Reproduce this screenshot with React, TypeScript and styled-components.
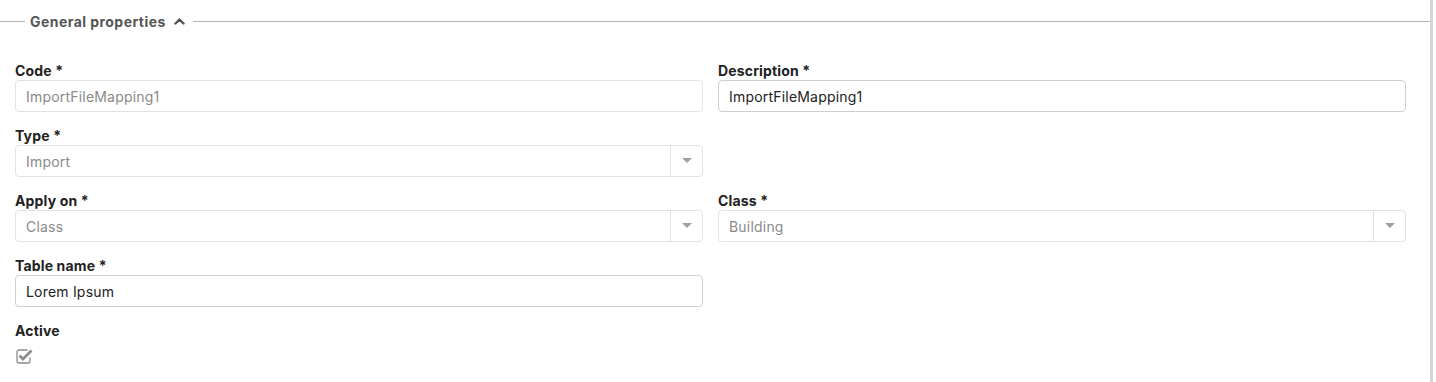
import React from 'react'
import styled, { createGlobalStyle } from 'styled-components'

const GlobalStyle = createGlobalStyle`
  html, body {
    margin: 0;
    padding: 0;
    background: #fff;
  }
  body {
    font-family: Inter, "Noto Sans", sans-serif;
    color: #222;
  }
`

const Page = styled.div`
  display: flex;
  width: 1436px;
  height: 382px;
  overflow: hidden;
`

const Content = styled.div`
  width: 1433px;
  flex: none;
  border-right: 3px solid #d5d5d5;
  box-sizing: border-box;
`

const Header = styled.div`
  display: flex;
  align-items: center;
  height: 42px;
`

const Line = styled.div<{ grow?: boolean }>`
  height: 1px;
  background: #b3b3b3;
  width: 25px;
  ${p => p.grow && `flex: 1;`}
`

const Legend = styled.div`
  display: flex;
  align-items: center;
  gap: 8px;
  padding: 0 8px 0 5px;
  font-size: 14px;
  font-weight: 700;
  color: #555;
  letter-spacing: 0.45px;
`

const Form = styled.div`
  display: grid;
  grid-template-columns: 688px 688px;
  column-gap: 15px;
  row-gap: 15px;
  padding: 20px 0 0 15px;
`

const Field = styled.div`
  display: flex;
  flex-direction: column;
`

const Label = styled.div`
  height: 18px;
  line-height: 18px;
  font-size: 14px;
  font-weight: 700;
  color: #222;
  letter-spacing: 0.15px;
`

const Input = styled.div<{ disabled?: boolean }>`
  display: flex;
  align-items: center;
  height: 32px;
  box-sizing: border-box;
  border: 1px solid ${p => (p.disabled ? '#e2e2e2' : '#cfcfcf')};
  border-radius: 4px;
  padding: 0 10px;
  font-size: 14px;
  letter-spacing: 0.2px;
  color: ${p => (p.disabled ? '#8a8a8a' : '#222')};
`

const Select = styled.div`
  display: flex;
  height: 32px;
  box-sizing: border-box;
  border: 1px solid #e2e2e2;
  border-radius: 4px;
  font-size: 14px;
  letter-spacing: 0.2px;
  color: #8a8a8a;
`

const SelectValue = styled.div`
  flex: 1;
  display: flex;
  align-items: center;
  padding: 0 10px;
`

const SelectArrow = styled.div`
  width: 31px;
  border-left: 1px solid #e2e2e2;
  display: flex;
  align-items: center;
  justify-content: center;
`

const Check = styled.div`
  height: 32px;
  display: flex;
  align-items: center;
  padding-left: 1px;
`

const Caret = () => (
  <svg width="10" height="6" viewBox="0 0 10 6">
    <path d="M0 0h10L5 5z" fill="#a0a0a0" />
  </svg>
)

const ChevronUp = () => (
  <svg width="11" height="8" viewBox="0 0 11 8">
    <path d="M1.5 6.5 5.5 2.5 9.5 6.5" fill="none" stroke="#555" strokeWidth="2.4" strokeLinecap="round" strokeLinejoin="round" />
  </svg>
)

const CheckIcon = () => (
  <svg width="17" height="16" viewBox="0 0 17 16">
    <path d="M13.5 9.5v3.5a2 2 0 0 1-2 2H2.5a2 2 0 0 1-2-2V4a2 2 0 0 1 2-2h8.5" fill="none" stroke="#8c8c8c" strokeWidth="1.3" transform="translate(0.5 0)" />
    <path d="M3.5 7.5l3.5 3.5 8.5-8.5" fill="none" stroke="#8c8c8c" strokeWidth="2.8" strokeLinejoin="miter" />
  </svg>
)

const SelectBox = ({ value }: { value: string }) => (
  <Select>
    <SelectValue>{value}</SelectValue>
    <SelectArrow><Caret /></SelectArrow>
  </Select>
)

const App = () => (
  <>
    <GlobalStyle />
    <Page>
      <Content>
        <Header>
          <Line />
          <Legend>
            General properties
            <ChevronUp />
          </Legend>
          <Line grow />
        </Header>
        <Form>
          <Field>
            <Label>Code *</Label>
            <Input disabled>ImportFileMapping1</Input>
          </Field>
          <Field>
            <Label>Description *</Label>
            <Input>ImportFileMapping1</Input>
          </Field>
          <Field>
            <Label>Type *</Label>
            <SelectBox value="Import" />
          </Field>
          <div />
          <Field>
            <Label>Apply on *</Label>
            <SelectBox value="Class" />
          </Field>
          <Field>
            <Label>Class *</Label>
            <SelectBox value="Building" />
          </Field>
          <Field>
            <Label>Table name *</Label>
            <Input>Lorem Ipsum</Input>
          </Field>
          <div />
          <Field>
            <Label>Active</Label>
            <Check><CheckIcon /></Check>
          </Field>
        </Form>
      </Content>
    </Page>
  </>
)

export default App
